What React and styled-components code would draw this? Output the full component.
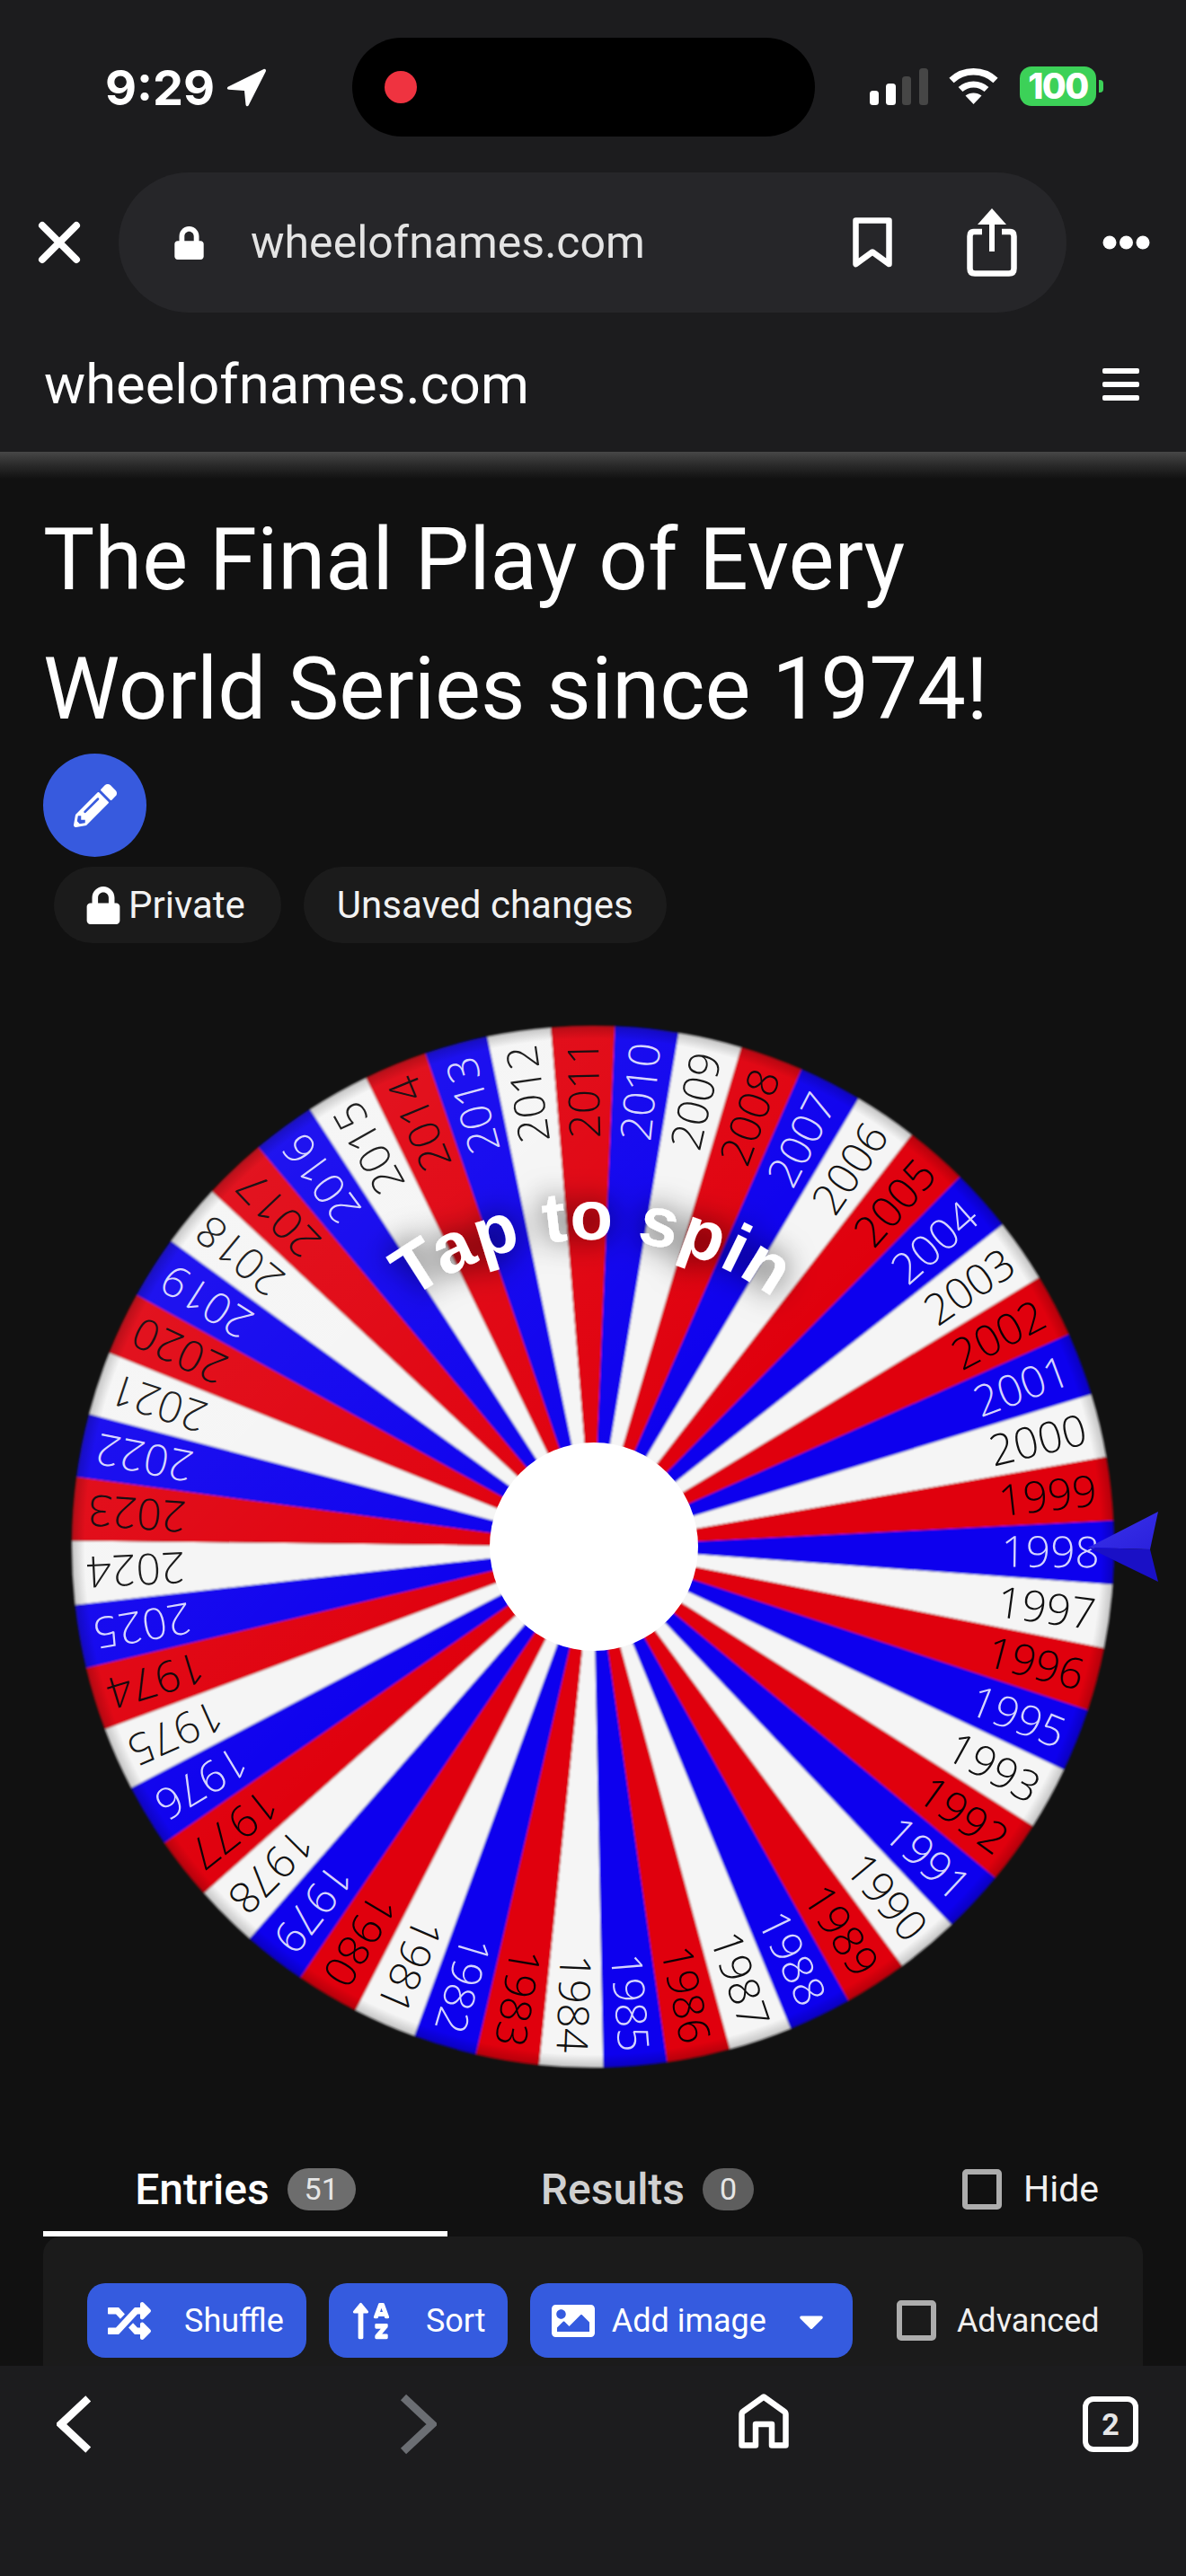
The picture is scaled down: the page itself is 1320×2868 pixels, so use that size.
import React from "react";
import styled, { createGlobalStyle } from "styled-components";
import { FaLock, FaPencilAlt, FaRandom, FaSortAlphaUp, FaImage, FaCaretDown } from "react-icons/fa";

const GlobalStyle = createGlobalStyle`
  html, body { margin: 0; background: #111; }
  * { box-sizing: border-box; }
`;

const Page = styled.div`
  width: 1320px;
  height: 2868px;
  display: flex;
  flex-direction: column;
  overflow: hidden;
  background: #111;
  color: #fff;
  font-family: Roboto, "Liberation Sans", sans-serif;
`;

const Chrome = styled.header`
  flex: none;
  background: #1c1c1e;
`;

const StatusBar = styled.div`
  height: 192px;
  padding-top: 42px;
  display: grid;
  grid-template-columns: 392px 515px 1fr;
  align-items: start;
`;

const StatusLeft = styled.div`
  height: 110px;
  padding-left: 117px;
  display: flex;
  align-items: center;
  gap: 13px;
`;

const Clock = styled.span`
  font-family: Inter, "Liberation Sans", sans-serif;
  font-size: 54px;
  font-weight: 700;
  letter-spacing: 0;
`;

const Island = styled.div`
  height: 110px;
  border-radius: 55px;
  background: #000;
  padding-left: 36px;
  display: flex;
  align-items: center;
`;

const RecDot = styled.span`
  width: 36px;
  height: 36px;
  border-radius: 50%;
  background: #ef3340;
`;

const StatusRight = styled.div`
  height: 110px;
  padding: 0 0 2px 61px;
  display: flex;
  align-items: center;
`;

const Battery = styled.div`
  width: 85px;
  height: 44px;
  margin-left: 23px;
  border-radius: 13px;
  background: #3cd158;
  color: #fff;
  font-family: Inter, "Liberation Sans", sans-serif;
  font-size: 39px;
  font-weight: 800;
  letter-spacing: -1.5px;
  line-height: 44px;
  text-align: center;
`;

const BatteryNub = styled.span`
  width: 5px;
  height: 14px;
  margin-left: 3px;
  border-radius: 0 4px 4px 0;
  background: #3cd158;
`;

const NavRow = styled.div`
  height: 156px;
  padding-left: 42px;
  display: flex;
  align-items: center;
`;

const UrlPill = styled.div`
  width: 1055px;
  height: 156px;
  margin: 0 40px 0 42px;
  padding: 0 55px 0 60px;
  border-radius: 78px;
  background: #262629;
  display: flex;
  align-items: center;
  color: #e4e4e4;
  font-size: 50px;
`;

const UrlText = styled.span`
  flex: 1;
  margin-left: 50px;
`;

const ShareSlot = styled.span`
  display: flex;
  margin-left: 83px;
`;

const SiteBar = styled.div`
  height: 155px;
  padding: 4px 52px 0 49px;
  display: flex;
  align-items: center;
  justify-content: space-between;
  font-size: 61.5px;
`;

const Shade = styled.div`
  flex: none;
  height: 30px;
  background: linear-gradient(#474747, #2a2a2a 50%, #111);
`;

const Main = styled.main`
  flex: 1;
  min-height: 0;
  overflow: hidden;
  padding: 18px 48px 0;
`;

const Title = styled.h1`
  margin: 0;
  font-size: 96px;
  font-weight: 400;
  line-height: 144px;
  white-space: nowrap;
`;

const EditButton = styled.div`
  width: 115px;
  height: 115px;
  border-radius: 50%;
  background: #375ade;
  display: flex;
  align-items: center;
  justify-content: center;
  font-size: 48px;
`;

const ChipRow = styled.div`
  margin-top: 11px;
  padding-left: 12px;
  display: flex;
  gap: 25px;
`;

const Chip = styled.div`
  height: 85px;
  padding: 0 ${(p) => p.$right}px 0 ${(p) => p.$left}px;
  border-radius: 43px;
  background: #1b1b1b;
  display: flex;
  align-items: center;
  gap: 7px;
  font-size: 42px;
  color: #f2f2f2;
`;

const WheelStage = styled.div`
  height: 1350px;
  margin: 0 -48px;
`;

const WheelSvg = styled.svg`
  display: block;
`;

const Tabs = styled.div`
  height: 90px;
  display: flex;
`;

const Tab = styled.div`
  width: ${(p) => p.$width}px;
  padding-bottom: 10px;
  display: flex;
  align-items: center;
  justify-content: center;
  gap: 20px;
  border-bottom: 6px solid ${(p) => (p.$active ? "#fff" : "transparent")};
  color: ${(p) => (p.$active ? "#fff" : "#d0d0d0")};
  font-size: 48px;
  font-weight: 500;
`;

const Count = styled.span`
  min-width: 56px;
  height: 47px;
  padding: 0 19px;
  border-radius: 24px;
  background: ${(p) => (p.$active ? "#6d6d6d" : "#5e5e5e")};
  color: #e6e6e6;
  font-size: 34px;
  font-weight: 400;
  line-height: 47px;
  text-align: center;
`;

const CheckField = styled.label`
  height: ${(p) => p.$height}px;
  display: flex;
  align-items: center;
  gap: ${(p) => p.$gap}px;
  margin-left: ${(p) => p.$left}px;
  font-size: ${(p) => p.$size}px;
  color: #f0f0f0;
`;

const Box = styled.span`
  width: 44px;
  height: 45px;
  border: 6px solid #adadad;
  border-radius: 5px;
`;

const Panel = styled.section`
  height: 260px;
  padding: 52px 49px 0;
  border-radius: 20px 20px 0 0;
  background: #1b1b1b;
  display: flex;
  align-items: flex-start;
  gap: 25px;
`;

const ActionButton = styled.div`
  height: 83px;
  padding: 0 ${(p) => p.$right}px 0 ${(p) => p.$left}px;
  border-radius: 20px;
  background: #355bdf;
  display: flex;
  align-items: center;
  font-size: 36px;
  color: #fff;
  white-space: nowrap;
`;

const ActionLabel = styled.span`
  margin-left: ${(p) => p.$gap}px;
`;

const Caret = styled.span`
  display: flex;
  margin-left: 28px;
  font-size: 44px;
`;

const BottomBar = styled.footer`
  flex: none;
  height: 234px;
  padding: 31px 53px 0 63px;
  background: #1c1c1e;
  display: flex;
  align-items: flex-start;
`;

const BottomSlot = styled.div`
  margin-left: ${(p) => p.$left}px;
  display: flex;
`;

const TabCounter = styled.div`
  width: 62px;
  height: 62px;
  margin-top: 3px;
  border: 6px solid #fff;
  border-radius: 12px;
  display: flex;
  align-items: center;
  justify-content: center;
  color: #e6e6e6;
  font-size: 34px;
  font-weight: 700;
`;

const WheelLabel = styled.text`
  font-family: "Open Sans", Lato, sans-serif;
  font-size: 48px;
  font-weight: 300;
  fill: ${(p) => p.$fill};
`;

const TapText = styled.text`
  font-family: "Liberation Sans", Arial, sans-serif;
  font-size: 78px;
  font-weight: 700;
  letter-spacing: 2px;
  fill: #fff;
`;

// clockwise from the pointer, colours repeat blue/white/red
const YEARS = [
  1998, 1997, 1996, 1995, 1993, 1992, 1991, 1990, 1989, 1988, 1987, 1986, 1985, 1984, 1983, 1982, 1981,
  1980, 1979, 1978, 1977, 1976, 1975, 1974, 2025, 2024, 2023, 2022, 2021, 2020, 2019, 2018, 2017,
  2016, 2015, 2014, 2013, 2012, 2011, 2010, 2009, 2008, 2007, 2006, 2005, 2004, 2003, 2002, 2001, 2000, 1999,
];
const SLICE_COLORS = ["#0e00ee", "#f5f5f5", "#e0000f"];
const TEXT_COLORS = ["#d5d4ff", "#111", "#0c0004"];

const CX = 660;
const CY = 672;
const R = 580;
const STEP = 360 / YEARS.length;
const OFFSET = 0.65;

const polar = (deg, r) => {
  const a = (deg * Math.PI) / 180;
  return [CX + r * Math.cos(a), CY + r * Math.sin(a)];
};

const slicePath = (i) => {
  const mid = OFFSET + i * STEP;
  const [x1, y1] = polar(mid - STEP / 2, R);
  const [x2, y2] = polar(mid + STEP / 2, R);
  return `M${CX} ${CY}L${x1} ${y1}A${R} ${R} 0 0 1 ${x2} ${y2}Z`;
};

const Wheel = () => (
  <WheelSvg width="1320" height="1350" viewBox="0 0 1320 1350">
    <defs>
      <filter id="soft" x="-5%" y="-5%" width="110%" height="110%">
        <feGaussianBlur stdDeviation="0.8" />
      </filter>
      <filter id="tapShadow" x="-30%" y="-60%" width="160%" height="220%">
        <feDropShadow dx="0" dy="0" stdDeviation="16" floodColor="#000" floodOpacity="0.75" />
      </filter>
      <linearGradient id="gloss" x1="0.1" y1="0.1" x2="0.5" y2="0.5">
        <stop offset="0" stopColor="#fff" stopOpacity="0.09" />
        <stop offset="1" stopColor="#fff" stopOpacity="0" />
      </linearGradient>
      <radialGradient id="rim" cx="0.5" cy="0.5" r="0.5">
        <stop offset="0.975" stopColor="#000" stopOpacity="0" />
        <stop offset="1" stopColor="#000" stopOpacity="0.2" />
      </radialGradient>
      <linearGradient id="pointerTop" x1="0" y1="0" x2="1" y2="1">
        <stop offset="0" stopColor="#3a33ea" />
        <stop offset="1" stopColor="#2a20dc" />
      </linearGradient>
      <path id="tapArc" d={`M${CX - 342} ${CY}A342 342 0 0 1 ${CX + 342} ${CY}`} />
    </defs>
    <g filter="url(#soft)">
      {YEARS.map((year, i) => (
        <path key={year} d={slicePath(i)} fill={SLICE_COLORS[i % 3]} />
      ))}
    </g>
    {YEARS.map((year, i) => (
      <WheelLabel
        key={year}
        x={CX + R - 16}
        y={CY}
        dy="17"
        textAnchor="end"
        $fill={TEXT_COLORS[i % 3]}
        transform={`rotate(${OFFSET + i * STEP} ${CX} ${CY})`}
      >
        {year}
      </WheelLabel>
    ))}
    <circle cx={CX} cy={CY} r={R} fill="url(#gloss)" />
    <circle cx={CX} cy={CY} r={R} fill="url(#rim)" />
    <circle cx={CX + 1} cy={CY} r="116" fill="#fff" />
    <TapText filter="url(#tapShadow)" textAnchor="middle">
      <textPath href="#tapArc" startOffset="50%">
        Tap to spin
      </textPath>
    </TapText>
    <path d={`M1211 ${CY + 1}L1289 ${CY - 39}L1280 ${CY + 3}Z`} fill="url(#pointerTop)" />
    <path d={`M1211 ${CY + 1}L1280 ${CY + 3}L1289 ${CY + 39}Z`} fill="#1a10c6" />
  </WheelSvg>
);

const LocationArrow = () => (
  <svg width="44" height="43" viewBox="0 0 44 43">
    <path d="M41.5 1 2 20.5c-1.8 1-1.4 3 .6 3.2l17.4 1.4 1.5 15.5c.2 2 2.4 2.4 3.2.6L43.8 3.5c.7-1.7-.7-3.2-2.3-2.5Z" fill="#fff" />
  </svg>
);

const SignalBars = () => (
  <svg width="65" height="41" viewBox="0 0 65 41">
    <rect x="0" y="25" width="10" height="16" rx="3.5" fill="#fff" />
    <rect x="18" y="17" width="11" height="24" rx="3.5" fill="#fff" />
    <rect x="36" y="9" width="10" height="32" rx="3.5" fill="#464646" />
    <rect x="55" y="0" width="10" height="41" rx="3.5" fill="#464646" />
  </svg>
);

const WifiIcon = () => (
  <svg width="57" height="42" viewBox="0 0 57 42" style={{ marginLeft: 22 }}>
    <path d="M4 14.5C17.5 1.5 39.5 1.5 53 14.5" fill="none" stroke="#fff" strokeWidth="7.5" />
    <path d="M14 24.5C22 17 35 17 43 24.5" fill="none" stroke="#fff" strokeWidth="7" />
    <path d="M28.5 41 19.5 31.5C24.5 27.5 32.5 27.5 37.5 31.5Z" fill="#fff" />
  </svg>
);

const CloseIcon = () => (
  <svg width="48" height="48" viewBox="0 0 48 48">
    <path d="M5 5 43 43M43 5 5 43" stroke="#fff" strokeWidth="8" strokeLinecap="round" />
  </svg>
);

const BookmarkIcon = () => (
  <svg width="44" height="57" viewBox="0 0 44 57">
    <path d="M3.5 3.5H40.5V52L22 38.5 3.5 52Z" fill="none" stroke="#fff" strokeWidth="6.5" strokeLinejoin="round" />
  </svg>
);

const ShareIcon = () => (
  <svg width="56" height="76" viewBox="0 0 56 76">
    <path d="M17 26H8Q3.5 26 3.5 31V67Q3.5 72.5 9 72.5H47Q52.5 72.5 52.5 67V31Q52.5 26 48 26H39" fill="none" stroke="#fff" strokeWidth="6.5" />
    <path d="M28 48V8" fill="none" stroke="#fff" strokeWidth="6" />
    <path d="M28 0 44 18H12Z" fill="#fff" />
  </svg>
);

const MoreIcon = () => (
  <svg width="53" height="16" viewBox="0 0 53 16">
    <circle cx="8" cy="8" r="7.5" fill="#fff" />
    <circle cx="26.5" cy="8" r="7.5" fill="#fff" />
    <circle cx="45" cy="8" r="7.5" fill="#fff" />
  </svg>
);

const MenuIcon = () => (
  <svg width="41" height="36" viewBox="0 0 41 36">
    <rect y="0" width="41" height="6" rx="2" fill="#fff" />
    <rect y="15" width="41" height="6" rx="2" fill="#fff" />
    <rect y="30" width="41" height="6" rx="2" fill="#fff" />
  </svg>
);

const Chevron = ({ flip, color }) => (
  <svg width="42" height="68" viewBox="0 0 42 68">
    <path
      d={flip ? "M5 4 37 34 5 64" : "M37 4 5 34 37 64"}
      fill="none"
      stroke={color}
      strokeWidth="9"
      strokeLinejoin="miter"
    />
  </svg>
);

const HomeIcon = () => (
  <svg width="56" height="61" viewBox="0 0 56 61">
    <path
      d="M3.5 23Q3.5 21 5 20L28 3.5 51 20Q52.5 21 52.5 23V57.5H37V34H19V57.5H3.5Z"
      fill="none"
      stroke="#fff"
      strokeWidth="6.5"
      strokeLinejoin="round"
    />
  </svg>
);

const App = () => (
  <Page>
    <GlobalStyle />
    <Chrome>
      <StatusBar>
        <StatusLeft>
          <Clock>9:29</Clock>
          <LocationArrow />
        </StatusLeft>
        <Island>
          <RecDot />
        </Island>
        <StatusRight>
          <SignalBars />
          <WifiIcon />
          <Battery>100</Battery>
          <BatteryNub />
        </StatusRight>
      </StatusBar>
      <NavRow>
        <CloseIcon />
        <UrlPill>
          <FaLock size={37} color="#fff" />
          <UrlText>wheelofnames.com</UrlText>
          <BookmarkIcon />
          <ShareSlot>
            <ShareIcon />
          </ShareSlot>
        </UrlPill>
        <MoreIcon />
      </NavRow>
      <SiteBar>
        <span>wheelofnames.com</span>
        <MenuIcon />
      </SiteBar>
    </Chrome>
    <Shade />
    <Main>
      <Title>
        The Final Play of Every
        <br />
        World Series since 1974!
      </Title>
      <EditButton>
        <FaPencilAlt />
      </EditButton>
      <ChipRow>
        <Chip $left={34} $right={40}>
          <FaLock size={42} color="#fff" />
          Private
        </Chip>
        <Chip $left={37} $right={37}>
          Unsaved changes
        </Chip>
      </ChipRow>
      <WheelStage>
        <Wheel />
      </WheelStage>
      <Tabs>
        <Tab $active $width={450}>
          Entries
          <Count $active>51</Count>
        </Tab>
        <Tab $width={445}>
          Results
          <Count>0</Count>
        </Tab>
        <CheckField $height={74} $gap={24} $left={128} $size={41}>
          <Box />
          Hide
        </CheckField>
      </Tabs>
      <Panel>
        <ActionButton $left={23} $right={25}>
          <FaRandom size={48} />
          <ActionLabel $gap={37}>Shuffle</ActionLabel>
        </ActionButton>
        <ActionButton $left={24} $right={24}>
          <FaSortAlphaUp size={46} />
          <ActionLabel $gap={38}>Sort</ActionLabel>
        </ActionButton>
        <ActionButton $left={24} $right={24}>
          <FaImage size={48} />
          <ActionLabel $gap={19}>Add image</ActionLabel>
          <Caret>
            <FaCaretDown />
          </Caret>
        </ActionButton>
        <CheckField $height={83} $gap={23} $left={24} $size={36}>
          <Box />
          Advanced
        </CheckField>
      </Panel>
    </Main>
    <BottomBar>
      <Chevron color="#fff" />
      <BottomSlot $left={341}>
        <Chevron flip color="#6b6e73" />
      </BottomSlot>
      <BottomSlot $left={336}>
        <HomeIcon />
      </BottomSlot>
      <BottomSlot $left={327}>
        <TabCounter>2</TabCounter>
      </BottomSlot>
    </BottomBar>
  </Page>
);

export default App;
